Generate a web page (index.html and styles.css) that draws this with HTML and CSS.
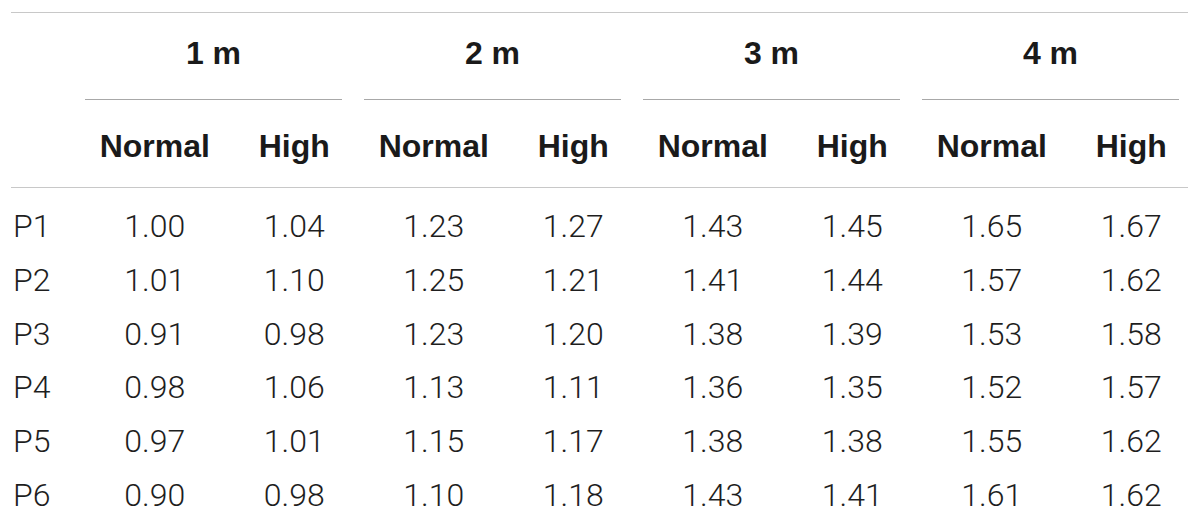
FILE: index.html
```html
<!DOCTYPE html>
<html lang="en">
<head>
<meta charset="utf-8">
<title>Table</title>
<link rel="stylesheet" href="styles.css">
</head>
<body>
<div class="table">
  <div class="groups">
    <div class="corner"></div>
    <div class="group"><span class="group-label">1 m</span></div>
    <div class="group"><span class="group-label">2 m</span></div>
    <div class="group"><span class="group-label">3 m</span></div>
    <div class="group"><span class="group-label">4 m</span></div>
  </div>
  <div class="subhead">
    <div class="cell label"></div>
    <div class="cell">Normal</div><div class="cell">High</div>
    <div class="cell">Normal</div><div class="cell">High</div>
    <div class="cell">Normal</div><div class="cell">High</div>
    <div class="cell">Normal</div><div class="cell">High</div>
  </div>
  <div class="body">
    <div class="row">
      <div class="cell label">P1</div>
      <div class="cell">1.00</div><div class="cell">1.04</div>
      <div class="cell">1.23</div><div class="cell">1.27</div>
      <div class="cell">1.43</div><div class="cell">1.45</div>
      <div class="cell">1.65</div><div class="cell">1.67</div>
    </div>
    <div class="row">
      <div class="cell label">P2</div>
      <div class="cell">1.01</div><div class="cell">1.10</div>
      <div class="cell">1.25</div><div class="cell">1.21</div>
      <div class="cell">1.41</div><div class="cell">1.44</div>
      <div class="cell">1.57</div><div class="cell">1.62</div>
    </div>
    <div class="row">
      <div class="cell label">P3</div>
      <div class="cell">0.91</div><div class="cell">0.98</div>
      <div class="cell">1.23</div><div class="cell">1.20</div>
      <div class="cell">1.38</div><div class="cell">1.39</div>
      <div class="cell">1.53</div><div class="cell">1.58</div>
    </div>
    <div class="row">
      <div class="cell label">P4</div>
      <div class="cell">0.98</div><div class="cell">1.06</div>
      <div class="cell">1.13</div><div class="cell">1.11</div>
      <div class="cell">1.36</div><div class="cell">1.35</div>
      <div class="cell">1.52</div><div class="cell">1.57</div>
    </div>
    <div class="row">
      <div class="cell label">P5</div>
      <div class="cell">0.97</div><div class="cell">1.01</div>
      <div class="cell">1.15</div><div class="cell">1.17</div>
      <div class="cell">1.38</div><div class="cell">1.38</div>
      <div class="cell">1.55</div><div class="cell">1.62</div>
    </div>
    <div class="row">
      <div class="cell label">P6</div>
      <div class="cell">0.90</div><div class="cell">0.98</div>
      <div class="cell">1.10</div><div class="cell">1.18</div>
      <div class="cell">1.43</div><div class="cell">1.41</div>
      <div class="cell">1.61</div><div class="cell">1.62</div>
    </div>
  </div>
</div>
</body>
</html>
```
FILE: styles.css
```css
html, body {
  margin: 0;
  padding: 0;
  background: #ffffff;
}

body {
  font-family: "Liberation Sans", Arial, Helvetica, sans-serif;
  font-size: 32px;
  color: #222222;
  overflow: hidden;
}

.table {
  margin: 12px 0 0 11px;
  width: 1177px;
  border-top: 1px solid #c8c8c8;
}

.groups {
  display: grid;
  grid-template-columns: 74px repeat(4, 279px);
}

.group {
  margin-right: 22px;
  padding: 22px 0 28px;
  border-bottom: 1px solid #a8a8a8;
  text-align: center;
  line-height: 36px;
  font-weight: bold;
  color: #1a1a1a;
}

.subhead {
  display: grid;
  grid-template-columns: 74px repeat(8, 139.5px);
  width: 1177px;
  padding: 28px 0 23px;
  border-bottom: 1px solid #c8c8c8;
  line-height: 36px;
  font-weight: bold;
  color: #1a1a1a;
}

.body {
  padding-top: 12px;
  font-family: Roboto, "Liberation Sans", Arial, sans-serif;
  font-weight: 300;
  color: #1e1e1e;
}

.row {
  display: grid;
  grid-template-columns: 74px repeat(8, 139.5px);
  line-height: 53.8px;
}

.cell {
  text-align: center;
  white-space: nowrap;
}

.cell.label {
  text-align: left;
  padding-left: 2px;
}
```
